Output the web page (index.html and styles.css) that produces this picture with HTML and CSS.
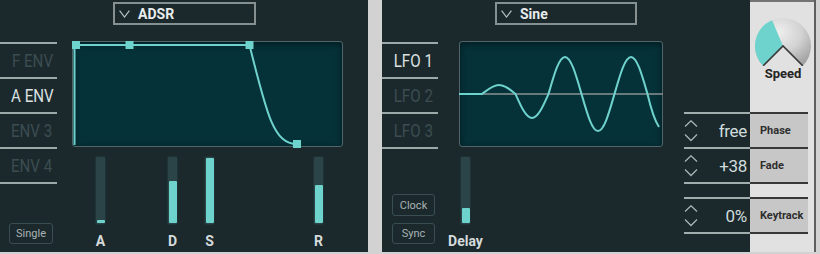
FILE: index.html
```html
<!DOCTYPE html>
<html>
<head>
<meta charset="utf-8">
<link rel="stylesheet" href="styles.css">
</head>
<body>
<div class="app">
  <section class="panel env">
    <header class="panel-head">
      <div class="dropdown">
        <svg class="chev" viewBox="0 0 11 8"><polyline points="0.6,0.6 5.5,7 10.4,0.6"/></svg>
        <span>ADSR</span>
      </div>
    </header>
    <div class="panel-body">
      <div class="side-col">
        <ul class="tabs">
          <li class="tab dim"><span>F ENV</span></li>
          <li class="tab active"><span>A ENV</span></li>
          <li class="tab dim"><span>ENV 3</span></li>
          <li class="tab dim last"><span>ENV 4</span></li>
        </ul>
        <div class="btns">
          <button class="btn">Single</button>
        </div>
      </div>
      <div class="main-col">
        <div class="graph">
          <svg class="plot" width="269" height="104" viewBox="1 1 269 104">
            <path class="curve" d="M2.5,104 L2.5,4 L177.5,4 C195,75 202,103 225,103"/>
            <rect class="pt" x="0" y="0" width="8" height="8"/>
            <rect class="pt" x="53.5" y="0" width="8" height="8"/>
            <rect class="pt" x="173.5" y="0" width="8" height="8"/>
            <rect class="pt" x="221" y="99" width="8" height="8"/>
          </svg>
        </div>
        <div class="sliders">
          <div class="slider s-a"><div class="track"><div class="fill" style="height:3px"></div></div><span class="slabel">A</span></div>
          <div class="slider s-d"><div class="track"><div class="fill" style="height:42px"></div></div><span class="slabel">D</span></div>
          <div class="slider s-s"><div class="track"><div class="fill" style="height:65px"></div></div><span class="slabel">S</span></div>
          <div class="slider s-r"><div class="track"><div class="fill" style="height:38px"></div></div><span class="slabel">R</span></div>
        </div>
      </div>
    </div>
  </section>

  <section class="panel lfo">
    <header class="panel-head">
      <div class="dropdown">
        <svg class="chev" viewBox="0 0 11 8"><polyline points="0.6,0.6 5.5,7 10.4,0.6"/></svg>
        <span>Sine</span>
      </div>
    </header>
    <div class="panel-body">
      <div class="side-col">
        <ul class="tabs">
          <li class="tab active"><span>LFO 1</span></li>
          <li class="tab dim"><span>LFO 2</span></li>
          <li class="tab dim last"><span>LFO 3</span></li>
        </ul>
        <div class="btns">
          <button class="btn">Clock</button>
          <button class="btn">Sync</button>
        </div>
      </div>
      <div class="main-col">
        <div class="graph">
          <svg class="plot" width="202" height="104" viewBox="1 1 202 104">
            <line class="axis" x1="0" y1="53" x2="204" y2="53"/>
            <path class="curve" d="M0,53 L23,53 C29,48.4 34,44 40,44 C46,44 51,48.4 56.5,53 C62,65.3 67,77 73,77 C79,77 84,65.3 89.5,53 C95,34 100,16 106,16 C112,16 117,34 122.5,53 C128,72 133,90 139,90 C145,90 150,72 155.5,53 C161,34 166,16 172,16 C178,16 183,34 188.5,53 C192,68 196,80 200,86"/>
          </svg>
        </div>
        <div class="sliders">
          <div class="slider s-delay"><div class="track"><div class="fill" style="height:15px"></div></div><span class="slabel">Delay</span></div>
        </div>
      </div>
    </div>
  </section>

  <aside class="ctrl">
    <div class="knob-cell">
      <svg class="knob" width="64" height="64" viewBox="0 0 64 64">
        <defs>
          <radialGradient id="kg" cx="0.42" cy="0.3" r="0.75">
            <stop offset="0" stop-color="#efefef"/>
            <stop offset="0.55" stop-color="#d2d2d2"/>
            <stop offset="1" stop-color="#a4a4a4"/>
          </radialGradient>
        </defs>
        <path d="M33,44 L13.2,63.8 A28,28 0 1 1 52.8,63.8 Z" fill="url(#kg)"/>
        <path d="M33,44 L13.2,63.8 A28,28 0 0 1 22.1,18.2 Z" fill="#6fd3cd"/>
        <polyline points="13.2,63.8 33,44 52.8,63.8" fill="none" stroke="#3a3a3a" stroke-width="1.6"/>
      </svg>
      <span class="knob-label">Speed</span>
    </div>
    <div class="prow">
      <div class="val">
        <svg class="arrows" viewBox="0 0 14 22"><polyline points="1,6.5 7,0.8 13,6.5"/><polyline points="1,14.5 7,20.5 13,14.5"/></svg>
        <span class="num">free</span>
      </div>
      <div class="lab">Phase</div>
    </div>
    <div class="prow last">
      <div class="val">
        <svg class="arrows" viewBox="0 0 14 22"><polyline points="1,6.5 7,0.8 13,6.5"/><polyline points="1,14.5 7,20.5 13,14.5"/></svg>
        <span class="num">+38</span>
      </div>
      <div class="lab">Fade</div>
    </div>
    <div class="pgap"></div>
    <div class="prow last">
      <div class="val">
        <svg class="arrows" viewBox="0 0 14 22"><polyline points="1,6.5 7,0.8 13,6.5"/><polyline points="1,14.5 7,20.5 13,14.5"/></svg>
        <span class="num">0%</span>
      </div>
      <div class="lab">Keytrack</div>
    </div>
  </aside>
</div>
</body>
</html>
```

FILE: styles.css
```css
* { box-sizing: border-box; margin: 0; padding: 0; }

body {
  margin: 0;
  width: 820px;
  height: 254px;
  overflow: hidden;
  background: #d2d2d2;
  font-family: Roboto, "Noto Sans", "Liberation Sans", sans-serif;
}

.app {
  display: flex;
  height: 252px;
}

.panel {
  background: #1b292d;
  display: flex;
  flex-direction: column;
}

.env { width: 368px; }
.lfo { width: 302px; margin-left: 14px; }

.panel-head {
  height: 41px;
  padding: 2px 0 0 113px;
}

.dropdown {
  width: 143px;
  height: 23px;
  border: 2px solid #879091;
  display: flex;
  align-items: center;
  gap: 8px;
  padding-left: 4px;
  color: #e8ecec;
  font-weight: 700;
  font-size: 14px;
}

.lfo .dropdown { width: 142px; }

.chev {
  width: 11px;
  height: 8px;
  fill: none;
  stroke: #b9c2c2;
  stroke-width: 1.2;
}

.panel-body {
  display: flex;
  flex: 1;
}

.side-col {
  display: flex;
  flex-direction: column;
}

.env .side-col { width: 57px; }
.lfo .side-col { width: 56px; }

.tabs {
  list-style: none;
  margin-top: 1px;
}

.tab {
  height: 35px;
  border-top: 2px solid #9da8a9;
  display: flex;
  align-items: center;
  justify-content: center;
  padding-left: 7px;
  font-size: 18px;
}

.tab.last {
  height: 37px;
  border-bottom: 2px solid #9da8a9;
}

.tab span {
  display: inline-block;
  transform: scaleX(0.84);
  white-space: nowrap;
}

.dim { color: #3b4d51; }
.active { color: #dce1e1; }

.btns {
  margin-top: auto;
  margin-bottom: 8px;
  display: flex;
  flex-direction: column;
  gap: 7px;
  padding-left: 9px;
}

.lfo .btns { padding-left: 10px; }

.btn {
  width: 44px;
  height: 21px;
  border: 1.5px solid #3a4e52;
  border-radius: 3px;
  background: transparent;
  color: #a9b3b3;
  font-family: Roboto, "Noto Sans", sans-serif;
  font-size: 11px;
}

.lfo .btn { width: 43px; }
.lfo .btn:first-child { height: 22px; }

.main-col {
  display: flex;
  flex-direction: column;
}

.graph {
  height: 106px;
  border: 1px solid #4f6569;
  border-radius: 3px;
  background: #053139;
  box-shadow: inset 0 2px 7px rgba(0, 0, 0, 0.45);
}

.env .graph { width: 271px; margin-left: 15px; }
.lfo .graph { width: 204px; margin-left: 21px; }

.plot {
  display: block;
  overflow: visible;
}

.curve {
  fill: none;
  stroke: #6fd3cd;
  stroke-width: 2;
}

.axis {
  stroke: #8a9393;
  stroke-width: 1.6;
}

.pt { fill: #6fd3cd; }

.sliders {
  display: flex;
  margin-top: 9px;
}

.slider {
  width: 23px;
  display: flex;
  flex-direction: column;
  align-items: center;
}

.s-a { margin-left: 32px; }
.s-d { margin-left: 49px; }
.s-s { margin-left: 14px; }
.s-r { margin-left: 86px; }
.s-delay { margin-left: 16px; }

.track {
  width: 11px;
  height: 69px;
  border: 1px solid #1f3236;
  border-radius: 2px;
  background: #2b4447;
  padding: 1px 0.5px;
  display: flex;
  flex-direction: column;
  justify-content: flex-end;
}

.fill {
  background: #6fd3cd;
  border-radius: 1px;
}

.slabel {
  margin-top: 8px;
  font-weight: 700;
  font-size: 14px;
  line-height: 16px;
  color: #d5dbdb;
  white-space: nowrap;
}

.ctrl {
  width: 132px;
  display: flex;
  flex-direction: column;
  background: linear-gradient(90deg, #1b292d 66px, #e1e1e1 66px);
  border-right: 2px solid #5e5e5e;
}

.knob-cell {
  margin-left: 66px;
  height: 112px;
  border-top: 2px solid #737373;
  display: flex;
  flex-direction: column;
  align-items: center;
}

.knob { display: block; }

.knob-label {
  font-weight: 700;
  font-size: 13px;
  line-height: 16px;
  color: #242424;
  margin-left: 2px;
}

.prow {
  display: grid;
  grid-template-columns: 66px 58px;
  height: 35px;
}

.prow.last { height: 37px; }

.val {
  border-top: 2px solid #a2aeae;
  display: flex;
  align-items: center;
  justify-content: space-between;
  padding-right: 3px;
}

.prow.last .val { border-bottom: 2px solid #a2aeae; }

.lab {
  border-top: 2px solid #383838;
  background: #c7c7c7;
  display: flex;
  align-items: center;
  padding-left: 10px;
  font-weight: 700;
  font-size: 11px;
  color: #2e2e2e;
}

.prow.last .lab { border-bottom: 2px solid #383838; }

.arrows {
  width: 14px;
  height: 22px;
  fill: none;
  stroke: #a6b5b5;
  stroke-width: 1.3;
}

.num {
  font-size: 17px;
  color: #d0dcdc;
  letter-spacing: -0.3px;
}

.pgap { height: 13px; }
```
